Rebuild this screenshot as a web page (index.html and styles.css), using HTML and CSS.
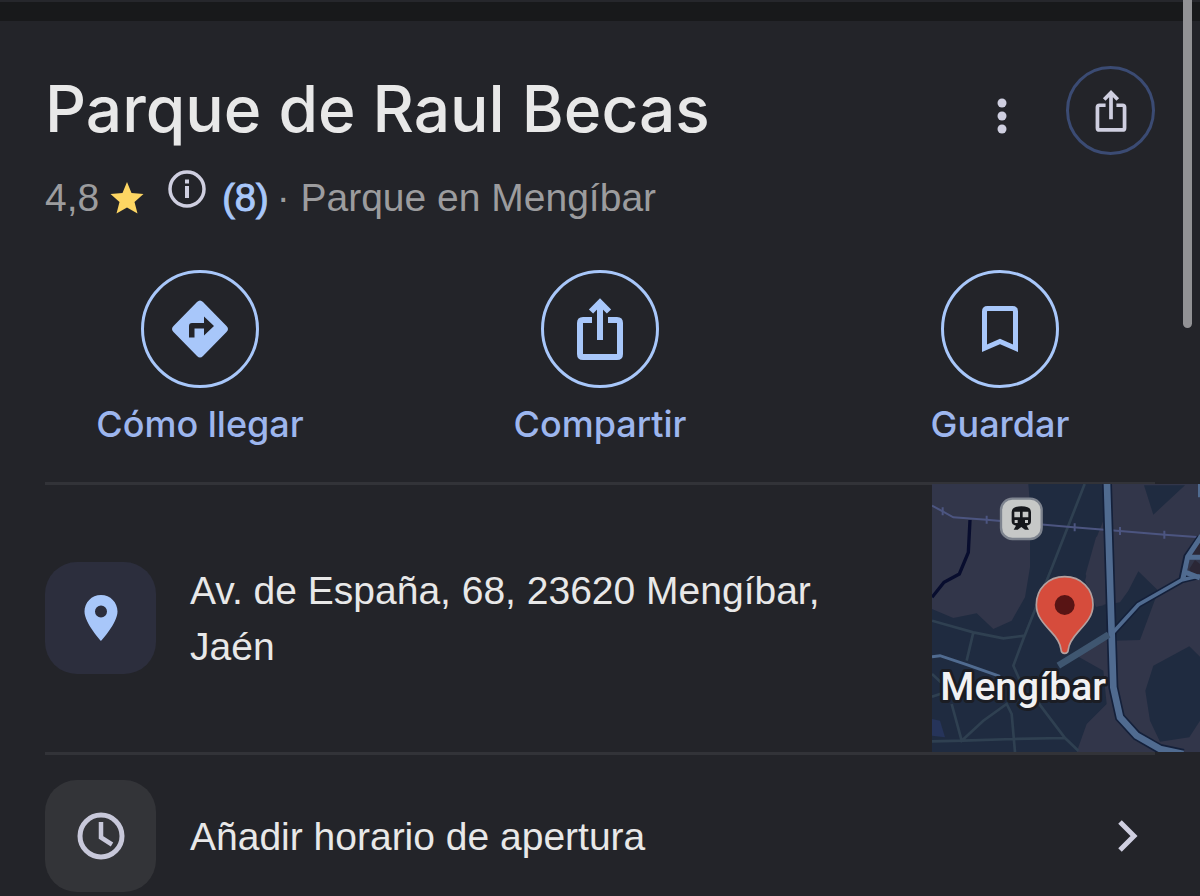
FILE: index.html
```html
<!DOCTYPE html>
<html lang="es">
<head>
    <meta charset="UTF-8">
    <meta name="viewport" content="width=device-width, initial-scale=1.0">
    <title>Parque de Raul Becas</title>
    <link rel="stylesheet" href="styles.css">
</head>
<body>
    <div class="topbar"></div>
    <div class="scroll-thumb"></div>

    <main class="panel">
        <header class="header">
            <h1 class="title">Parque de Raul Becas</h1>
            <button class="icon-button" aria-label="Más opciones">
                <svg width="10" height="36" viewBox="0 0 10 36" fill="currentColor">
                    <circle cx="5" cy="5" r="4.5"/>
                    <circle cx="5" cy="18" r="4.5"/>
                    <circle cx="5" cy="31" r="4.5"/>
                </svg>
            </button>
            <button class="icon-button share-button" aria-label="Compartir">
                <svg width="32" height="42" viewBox="0 0 46 62" fill="none" stroke="currentColor" stroke-width="5.5">
                    <path d="M15 22.5H6Q3 22.5 3 25.5V56Q3 59 6 59H40Q43 59 43 56V25.5Q43 22.5 40 22.5H31"/>
                    <path d="M23 43V5M13 14L23 4L33 14"/>
                </svg>
            </button>
        </header>

        <div class="rating">
            <span class="score">4,8</span>
            <svg class="star" width="34" height="32" viewBox="0 0 34 32" fill="#fdd663">
                <path d="M17 0L21.500 11L33.500 12L24.500 20L27.500 31.500L17 25.500L6.500 31.500L9.500 20L.5 12L12.500 11Z"/>
            </svg>
            <button class="info" aria-label="Información">
                <svg width="38" height="38" viewBox="0 0 38 38">
                    <circle cx="19" cy="19" r="17" fill="none" stroke="currentColor" stroke-width="3.500"/>
                    <path d="M17 9.500h4v4h-4zM17 16h4v12h-4z" fill="currentColor"/>
                </svg>
            </button>
            <a class="reviews" href="#">(8)</a>
            <span class="category">· Parque en Mengíbar</span>
        </div>

        <nav class="actions">
            <button class="action">
                <span class="action-circle">
                    <svg width="56" height="58" viewBox="0 0 56 58">
                        <path d="M25 2Q28-1 31 2L54.500 26Q57.500 29 54.500 32L31 56Q28 59 25 56L1.500 32Q-1.500 29 1.500 26Z" fill="#a8c7fa"/>
                        <path d="M17 37.500V26Q17 23 20 23H32V16.500L42 26L32 35.500V28.500H22.500V37.500Z" fill="#232429"/>
                    </svg>
                </span>
                <span class="action-label">Cómo llegar</span>
            </button>
            <button class="action">
                <span class="action-circle">
                    <svg width="46" height="62" viewBox="0 0 46 62" fill="none" stroke="#a8c7fa" stroke-width="6">
                        <path d="M15 22H6Q3 22 3 25V56Q3 59 6 59H40Q43 59 43 56V25Q43 22 40 22H31"/>
                        <path d="M23 42V5M14 13.500L23 4.500L32 13.500"/>
                    </svg>
                </span>
                <span class="action-label">Compartir</span>
            </button>
            <button class="action">
                <span class="action-circle">
                    <svg width="36" height="46" viewBox="0 0 36 46" fill="none" stroke="#a8c7fa" stroke-width="5">
                        <path d="M2.500 42.200V5.500Q2.500 2.500 5.500 2.500H30.500Q33.500 2.500 33.500 5.500V42.200L18 35.500Z"/>
                    </svg>
                </span>
                <span class="action-label">Guardar</span>
            </button>
        </nav>

        <section class="row address">
            <span class="tile tile-blue">
                <svg width="34" height="46" viewBox="0 0 34 46" fill="#a8c7fa">
                    <path fill-rule="evenodd" d="M17 0C7.500 0 .5 7.500 .5 16.500C.5 28 17 46 17 46S33.500 28 33.500 16.500C33.500 7.500 26.500 0 17 0ZM17 10.500a6 6 0 1 1 0 12a6 6 0 1 1 0-12Z"/>
                </svg>
            </span>
            <p class="row-text">Av. de España, 68, 23620 Mengíbar, Jaén</p>
            <a class="map" href="#" aria-label="Ver en el mapa">
                <svg viewBox="36 30 804 804">
                    <rect x="36" y="30" width="804" height="804" fill="#32364a"/>
                    <!-- darker terrain -->
                    <g fill="#1f2b40">
                        <path d="M325 30H550V480L580 500L660 498L715 350L655 292L625 350L600 385L528 398L495 320L530 190L550 140V30H325L330 90V280L315 370L275 440L220 465L170 418L100 432L36 405V834H470L500 750L560 690L550 590L470 545L560 490L550 30Z"/>
                        <path d="M672 34L700 122L795 34ZM700 575L808 517L840 548V740L808 790L720 803L690 740L676 650Z"/>
                    </g>
                    <path d="M528 190L497 300L528 398L560 390V165Z" fill="#32364a"/>
                    <path d="M36 735L60 740L75 790L36 785Z" fill="#26345a"/>
                    <!-- minor streets -->
                    <g fill="none" stroke="#2f4051" stroke-width="8">
                        <path d="M494 30L400 270L310 495L280 575L300 620M36 440L160 475L250 493L315 485M160 475L140 560M36 802L130 800L280 795L435 792M95 690L125 800L190 740L260 690L275 720L285 834M350 680L435 792L475 830M36 600L90 650L36 668"/>
                    </g>
                    <!-- railway -->
                    <g fill="none" stroke="#4c5580" stroke-width="6">
                        <path d="M36 95L68 112L100 130L200 137L460 160L600 171L735 182L840 190"/>
                        <path d="M68 100V124M200 125V149M464 148V172M600 159V183M733 170V194"/>
                    </g>
                    <path d="M150 138L145 235L118 300L72 325L36 370" fill="none" stroke="#080d2e" stroke-width="10"/>
                    <!-- main roads -->
                    <g fill="none" stroke="#14203a" stroke-width="30">
                        <path d="M561 30L575 480L580 640L600 730L650 785L720 825L790 840"/>
                        <path d="M575 480L655 392L785 318L840 305M785 318L800 248L840 190" stroke-width="20"/>
                    </g>
                    <path d="M815 245L828 215L840 205V245ZM808 285L825 258L840 270V300L815 300Z" fill="#2b2736"/>
                    <g fill="none" stroke="#506b90">
                        <path d="M561 30L575 480L580 640L600 730L650 785L720 825L790 840" stroke-width="20"/>
                        <path d="M566 482L480 535L415 575" stroke-width="20" stroke="#3f5670"/>
                        <path d="M575 480L655 392L785 318L840 305" stroke-width="11"/>
                        <path d="M788 318L803 248L845 185M803 250H845M797 295L840 312" stroke-width="15"/>
                        <path d="M36 548L60 545L140 572L240 607" stroke-width="9"/>
                        <path d="M838 30V70" stroke-width="8"/>
                    </g>
                    <!-- station -->
                    <rect x="243" y="74" width="122" height="121" rx="34" fill="#c6c8c7" stroke="#7e848f" stroke-width="7"/>
                    <path fill="#15171b" fill-rule="evenodd" d="M275 114Q275 97 304 97Q333 97 333 114V142Q333 153 320 155L327 167H315L304 159L293 167H281L288 155Q275 153 275 142ZM283 113V130H300V113ZM308 113V130H325V113ZM284 138V147H293V138ZM315 138V147H324V138Z"/>
                    <!-- marker -->
                    <path d="M434 308C384 308 349 345 349 392C349 425 368 446 393 473C412 493 421 507 423 526Q424 538 434 538Q444 538 445 526C447 507 457 493 475 473C500 446 519 425 519 392C519 345 484 308 434 308Z" fill="#d64c3c" stroke="#b3a09f" stroke-width="5"/>
                    <circle cx="434" cy="393" r="30" fill="#581414"/>
                    <text class="map-label" x="61" y="678">Mengíbar</text>
                </svg>
            </a>
        </section>

        <button class="row hours">
            <span class="tile">
                <svg width="48" height="48" viewBox="0 0 48 48" fill="none" stroke="currentColor">
                    <circle cx="24" cy="24" r="21" stroke-width="5"/>
                    <path d="M24 10V25.500L35 32.500" stroke-width="4.500"/>
                </svg>
            </span>
            <span class="row-text">Añadir horario de apertura</span>
            <svg class="chevron" width="20" height="32" viewBox="0 0 20 32" fill="none" stroke="currentColor" stroke-width="5">
                <path d="M2 2L16 16L2 30"/>
            </svg>
        </button>
    </main>
</body>
</html>
```

FILE: styles.css
```css
* {
    box-sizing: border-box;
}
body {
    margin: 0;
    background-color: #232429;
    color: #e8e8e8;
    font-family: "Liberation Sans", Arial, sans-serif;
    font-size: 39px;
}
button {
    margin: 0;
    padding: 0;
    border: none;
    background: none;
    color: inherit;
    font: inherit;
    cursor: pointer;
}
a {
    color: #a8c7fa;
    text-decoration: none;
}
svg {
    display: block;
    flex: none;
}
.topbar {
    height: 21px;
    border-top: 2px solid #26272c;
    background-color: #18191b;
}
.scroll-thumb {
    position: absolute;
    top: 0;
    right: 8px;
    width: 9px;
    height: 328px;
    border-radius: 0 0 5px 5px;
    background-color: #929295;
}
.header {
    display: flex;
    align-items: center;
    padding: 45px 45px 0;
}
.title {
    flex: 1;
    margin: 0 0 4px;
    font-family: Inter, sans-serif;
    font-size: 64px;
    font-weight: 500;
    line-height: 84px;
}
.icon-button {
    display: flex;
    align-items: center;
    justify-content: center;
    width: 40px;
    height: 80px;
    padding-top: 10px;
    color: #cfcfe0;
}
.share-button {
    width: 89px;
    height: 89px;
    margin-left: 44px;
    padding: 0;
    border: 3px solid #3b4b73;
    border-radius: 50%;
}
.rating {
    display: flex;
    align-items: center;
    height: 60px;
    margin-top: 13px;
    padding: 0 45px;
    color: #9c9c9e;
}
.star {
    margin-left: 11px;
}
.info {
    align-self: flex-start;
    margin: 2px 16px 0 24px;
    color: #cfcfe0;
}
.reviews {
    margin-right: 8px;
    font-size: 38px;
    -webkit-text-stroke: 1px;
}
.actions {
    display: grid;
    grid-template-columns: repeat(3, 1fr);
    margin-top: 42px;
    padding-bottom: 34px;
}
.action {
    display: flex;
    flex-direction: column;
    align-items: center;
    gap: 12px;
    color: #9db6ee;
}
.action-circle {
    display: flex;
    align-items: center;
    justify-content: center;
    width: 118px;
    height: 118px;
    border: 3px solid #a8c7fa;
    border-radius: 50%;
}
.action-label {
    font-family: Inter, sans-serif;
    font-size: 36px;
    font-weight: 500;
    line-height: 48px;
}
.row {
    display: flex;
    align-items: center;
    gap: 34px;
    width: 100%;
    padding-left: 45px;
    text-align: left;
    background: linear-gradient(#323338, #323338) no-repeat 45px 0 / calc(100% - 90px) 3px;
}
.address {
    height: 270px;
    padding-top: 2px;
}
.row-text {
    flex: 1;
    margin: 0;
    padding-top: 2px;
    line-height: 56px;
}
.tile {
    display: flex;
    align-items: center;
    justify-content: center;
    flex: none;
    width: 111px;
    height: 112px;
    border-radius: 32px;
    background-color: #333438;
    color: #c8c8da;
}
.tile-blue {
    background-color: #2c2e3d;
}
.map {
    flex: none;
    width: 268px;
}
.map-label {
    fill: #f1f1f3;
    stroke: #1b1d24;
    stroke-width: 18px;
    stroke-linejoin: round;
    paint-order: stroke;
    font-family: Roboto, sans-serif;
    font-size: 117px;
    font-weight: 500;
}
.hours {
    padding: 28px 62px 4px 45px;
}
.chevron {
    color: #cfcfe0;
}
```
